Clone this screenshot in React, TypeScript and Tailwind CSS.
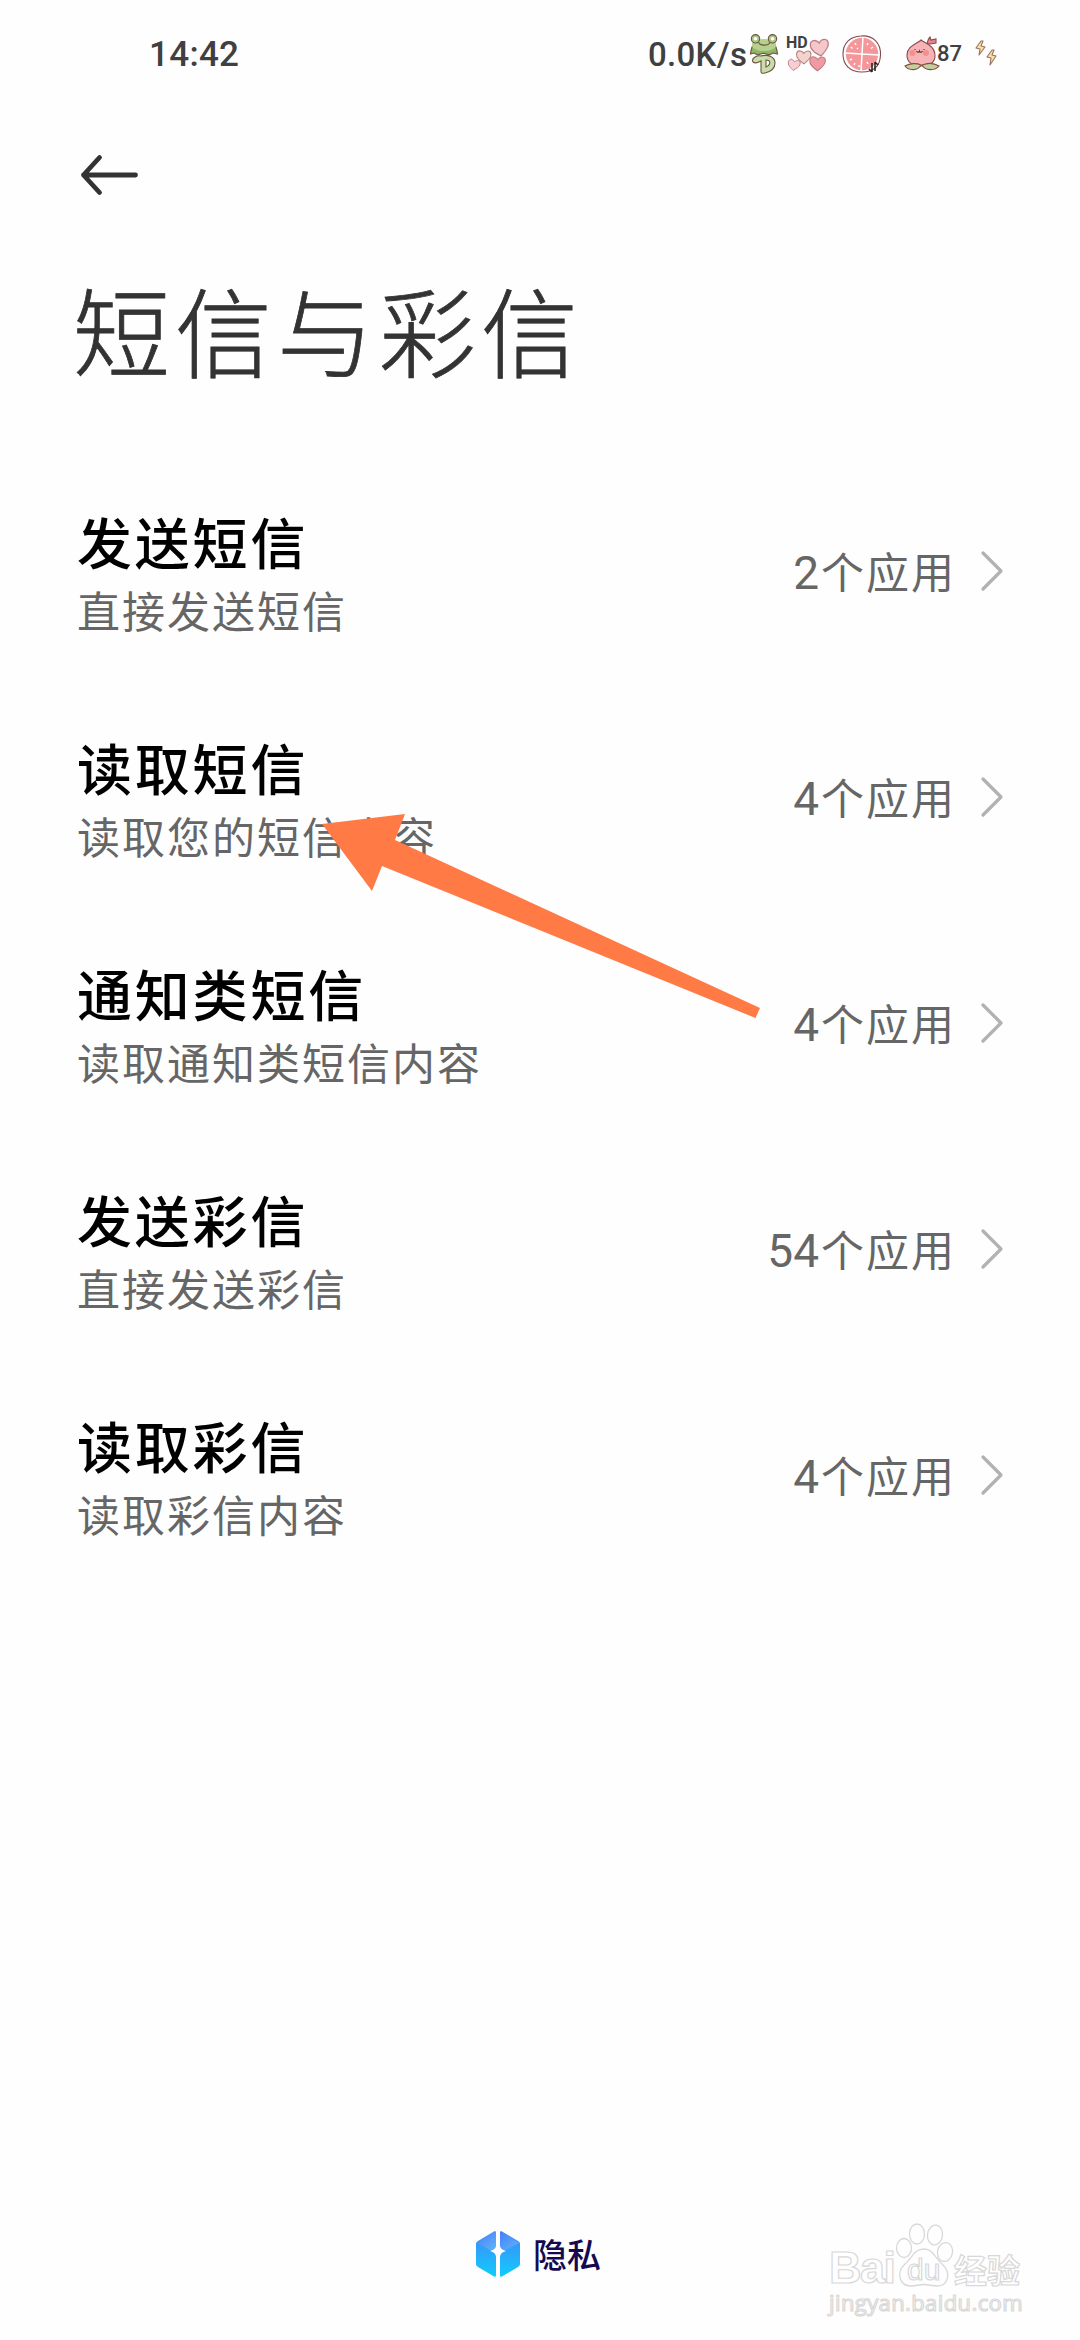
import { clsx } from "clsx";

type Permission = {
  title: string;
  summary: string;
  count: number;
};

const permissions: Permission[] = [
  { title: "发送短信", summary: "直接发送短信", count: 2 },
  { title: "读取短信", summary: "读取您的短信内容", count: 4 },
  { title: "通知类短信", summary: "读取通知类短信内容", count: 4 },
  { title: "发送彩信", summary: "直接发送彩信", count: 54 },
  { title: "读取彩信", summary: "读取彩信内容", count: 4 },
];

const cjk = "font-['Noto_Sans_CJK_SC',sans-serif]";
const latin = "font-[Roboto,'Noto_Sans_CJK_SC',sans-serif]";

function FrogIcon() {
  return (
    <svg width="30" height="42" viewBox="0 0 30 42" className="ml-[3px] shrink-0" fill="none" stroke="#6f5240" strokeWidth="1.1">
      <path d="M6 9C3 12 2 17 1.500 21l3.500-1 3.500 1.800 6-1.500 6 1.500 3.500-1.800 4.500 1C28 17 27 12 24 9z" fill="#8fb569" />
      <path d="M4 9c4-4 18-4 22 0c2 4 1 6-3 7.500c-5 2-11 2-16 0c-4-1.500-5-3.500-3-7.500z" fill="#b5d18c" stroke="none" />
      <circle cx="6.500" cy="5.800" r="4.200" fill="#a9c884" />
      <circle cx="23.500" cy="5.800" r="4.200" fill="#a9c884" />
      <circle cx="6.500" cy="5.800" r="1.800" fill="#fff" stroke="none" />
      <circle cx="23.500" cy="5.800" r="1.800" fill="#fff" stroke="none" />
      <path d="M9.500 9.500c2 3.500 9.500 3.500 11.500 0" />
      <path d="M12 23c-4-1-9 2-8.500 5c1 3 5 2 8.500 0v10.500c0 2 2 2 4 1.500c6-1.500 10-5 10-10c0-6-7-9-14-7z" fill="#c6deaa" />
      <path d="M17 27c5 0 5 5 0 7z" fill="#fff" />
    </svg>
  );
}

function HeartsIcon() {
  const heart = "M0 3C-3-1-9-1-9 5C-9 10-4 13 1 16C5 12 9 9 9 4C9-1 3-2 0 3Z";
  return (
    <svg width="46" height="38" viewBox="0 0 46 38" className="absolute left-0 top-[5px]" stroke="#b98084" strokeWidth="1.300">
      <path d={heart} fill="#f7c6cb" transform="translate(33 2) rotate(-4)" />
      <path d={heart} fill="#f5d3cd" transform="translate(18 13) rotate(4) scale(.8)" />
      <path d={heart} fill="#f9cdd2" transform="translate(9 22) rotate(14) scale(.66)" />
      <path d={heart} fill="#f19aa4" transform="translate(32 19) rotate(6) scale(.86)" />
    </svg>
  );
}

function CitrusIcon() {
  return (
    <svg width="42" height="40" viewBox="0 0 42 40" className="ml-[9px] shrink-0" fill="none">
      <path d="M20 2C32 1 40 9 39.500 21C39 32 33 38 21 38C9 38 2 31 2 20C2 9 9 2.500 20 2Z" fill="#fff" stroke="#86494d" strokeWidth="1.100" />
      <circle cx="21" cy="20" r="16.200" fill="#f4979b" />
      <path d="M22 3L20 37M4 19L38 21" stroke="#fff" strokeWidth="1.500" />
      <path d="M14 9l1 2M10 13l1.500 1.500M27 9l-1 2M32 13l-2 1.500M9 26l2-1M13 31l1-2M18 33v-2M16 14l1 1M27 30l-1-2" stroke="#fff" strokeWidth="1.400" />
      <path d="M31 29v9M31 38l-3-3M34 37v-9M34 28l3 3" stroke="#2b2222" strokeWidth="1.600" />
    </svg>
  );
}

function PeachIcon() {
  return (
    <svg width="36" height="36" viewBox="0 0 36 36" className="ml-[21px] shrink-0" fill="none" stroke="#8a4a4a" strokeWidth="1.100">
      <path d="M23 8c1-4 1-5 3-7l1 3l5-1v4l-6 1z" fill="#e5858b" />
      <path d="M17 4c3 3 14 5 14 16c0 6-5 10-14 10S3 26 3 19C3 10 13 8 17 4Z" fill="#f7b4b6" />
      <circle cx="8.500" cy="17" r="3" fill="#f4908c" stroke="none" />
      <circle cx="22" cy="17" r="3" fill="#f4908c" stroke="none" />
      <path d="M11 13v1M20 13v1M12.500 15c1 2 2.500 1.500 3 0c.5 1.500 2 2 3 0" stroke="#5b2b2b" />
      <path d="M1 30c5-3 12-3 16-1c-3 6-12 6-16 1ZM35 30c-5-3-12-3-17-1c3 6 13 6 17 1Z" fill="#bed29a" />
    </svg>
  );
}

function BoltsIcon() {
  return (
    <svg width="24" height="28" viewBox="0 0 24 28" className="ml-[13px] shrink-0" fill="#f8e2a6" stroke="#9a7060" strokeWidth="1.100" strokeLinejoin="round">
      <path d="M6 1L1 8l4 1-1 6 6-8-4-1 2-5z" />
      <path d="M17 10l-5 7 4 1-1 7 6-9-4-1 2-5z" />
    </svg>
  );
}

function StatusBar() {
  return (
    <header className={clsx("flex h-[108px] items-center pl-[149px] text-[#404040]", latin)}>
      <span className="w-[499px] text-[35px] leading-none font-medium tracking-[0.3px]">14:42</span>
      <span className="w-[98px] whitespace-nowrap text-[33px] leading-none font-medium tracking-[0.3px]">0.0K/s</span>
      <FrogIcon />
      <span className="relative ml-[7px] block h-[43px] w-[46px] shrink-0">
        <HeartsIcon />
        <span className="relative block pt-px text-[16px] leading-[18px] font-bold">HD</span>
      </span>
      <CitrusIcon />
      <PeachIcon />
      <span className="-ml-[3px] w-[25px] text-[22px] leading-none font-medium">87</span>
      <BoltsIcon />
    </header>
  );
}

function PermissionRow({ title, summary, count }: Permission) {
  return (
    <li className="flex h-[226px] items-center pr-[76px] pl-[77px]">
      <div className="flex-1 pt-[2px]">
        <div className="text-[55px] leading-[72px] font-medium tracking-[2.800px] text-black">{title}</div>
        <div className="mt-px text-[43px] leading-[64px] tracking-[2px] text-[#666]">{summary}</div>
      </div>
      <span className="text-[43px] leading-[60px] tracking-[2px] whitespace-nowrap text-[#666]">
        <span className={clsx("mr-[2px] text-[46px] tracking-normal", latin)}>{count}</span>个应用
      </span>
      <svg width="24" height="42" viewBox="0 0 24 42" className="ml-[24px]" fill="none" stroke="#b2b2b2" strokeWidth="3.300" strokeLinecap="round" strokeLinejoin="round">
        <path d="M3 3l18 18L3 39" />
      </svg>
    </li>
  );
}

function PrivacyBadge() {
  return (
    <div className="flex h-[60px] items-center pl-[475px]">
      <svg width="46" height="50" viewBox="0 0 46 50">
        <defs>
          <linearGradient id="hex" x1="0" y1="0" x2="0" y2="1">
            <stop offset="0" stopColor="#4285f8" />
            <stop offset="1" stopColor="#10cdfc" />
          </linearGradient>
          <linearGradient id="lid" x1="0" y1="0" x2="1" y2="1">
            <stop offset="0" stopColor="#4a7df6" />
            <stop offset="1" stopColor="#74bbfb" />
          </linearGradient>
        </defs>
        <path d="M19 2.500c1-.5 2 0 2 1V17c-1 3-3 4-6 5c4 1 6 3 6 6v18c0 2-1 2-2 1.500L3 38c-1.500-1-2-2-2-3V15c0-1.500.5-2 2-3z" fill="url(#hex)" />
        <path d="M27 2.500c-1-.5-2 0-2 1V17c1 3 3 4 6 5c-4 1-6 3-6 6v18c0 2 1 2 2 1.500L43 38c1.500-1 2-2 2-3V15c0-1.500-.5-2-2-3z" fill="url(#hex)" />
        <path d="M2 14L19 3c1-.5 2 0 2 1v13c-1 3-3 4-6 4z" fill="url(#lid)" opacity=".7" />
        <path d="M44 14L27 3c-1-.5-2 0-2 1v13c1 3 3 4 6 4z" fill="url(#lid)" opacity=".7" />
      </svg>
      <span className="ml-[12px] text-[34px] leading-none font-medium text-[#150a52]">隐私</span>
    </div>
  );
}

function Watermark() {
  return (
    <div className="absolute top-[2221px] left-[829px] w-[200px] text-white [-webkit-text-stroke:1.2px_#d8d8d8]">
      <div className="flex h-[68px] items-end">
        <span className="w-[65px] font-['Liberation_Sans',sans-serif] text-[45px] leading-[42px] font-bold tracking-[-1.5px]">Bai</span>
        <span className="relative block h-[70px] w-[60px]">
          <svg width="60" height="70" viewBox="0 0 60 70" fill="#fefefe" stroke="#d8d8d8" strokeWidth="1.300">
            <ellipse cx="10" cy="29" rx="7.500" ry="9.500" />
            <ellipse cx="23" cy="15" rx="7.500" ry="10" />
            <ellipse cx="41" cy="16" rx="7.500" ry="10" transform="rotate(8 41 16)" />
            <ellipse cx="51" cy="33" rx="7.500" ry="9.500" transform="rotate(12 51 33)" />
            <path d="M30 30c9 0 11 9 18 15c10 9 6 22-5 22c-5 0-8-1.500-13-1.500S22 67 17 67C5 67 2 53 11 45c7-6 9-15 19-15z" />
          </svg>
          <span className="absolute top-[36px] left-[13px] font-['Liberation_Sans',sans-serif] text-[30px] leading-[30px]">du</span>
        </span>
        <span className="pb-[3px] text-[33px] leading-[34px] font-bold">经验</span>
      </div>
      <div className="-mt-px font-['Open_Sans',sans-serif] text-[22px] leading-[28px] tracking-[0.4px]">jingyan.baidu.com</div>
    </div>
  );
}

export default function App() {
  return (
    <div className={clsx("relative flex h-[2340px] w-[1080px] flex-col overflow-hidden bg-[#fefefe]", cjk)}>
      <StatusBar />

      <div className="flex h-[134px] items-center pl-[79px]">
        <svg width="62" height="44" viewBox="0 0 62 44" fill="none" stroke="#333" strokeWidth="4.800" strokeLinecap="round" strokeLinejoin="round">
          <path d="M20.500 4.500L4.500 22l16 17.500M4.500 22h52" />
        </svg>
      </div>

      <h1 className="h-[216px] pt-[16px] pl-[73px] text-[97px] leading-[140px] font-light tracking-[5px] text-[#333] [-webkit-text-stroke:0.8px_#333]">短信与彩信</h1>

      <ul className="h-[1766px]">
        {permissions.map((item) => (
          <PermissionRow key={item.title} {...item} />
        ))}
      </ul>

      <PrivacyBadge />
      <Watermark />

      {/* pointer over the second row */}
      <svg width="440" height="210" viewBox="0 0 440 210" className="absolute top-[812px] left-[321px]" fill="#ff7a45">
        <path d="M1 12L84 2L74 28L439 196L434.500 206L61 54L51 79Z" />
      </svg>
    </div>
  );
}
